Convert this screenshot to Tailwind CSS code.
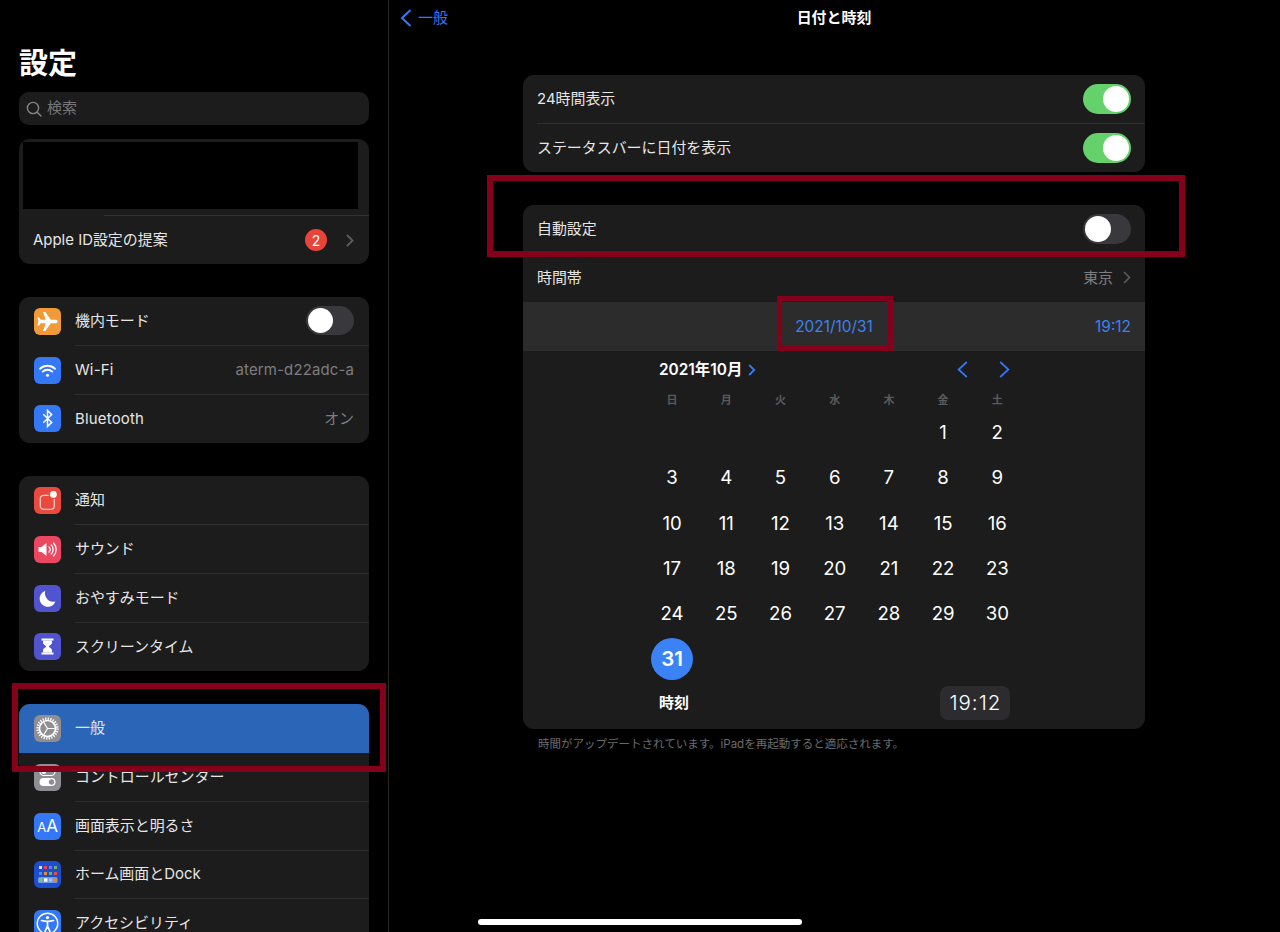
<!DOCTYPE html>
<html lang="ja">
<head>
<meta charset="utf-8">
<title>日付と時刻</title>
<script src="https://cdn.jsdelivr.net/npm/@tailwindcss/browser@4"></script>
</head>
<body class="bg-black">
<div class="relative flex w-[1280px] h-[932px] overflow-hidden bg-black text-[#e6e6e6] text-[14.95px] font-['Inter','Noto_Sans_CJK_JP',sans-serif]">

  <!-- Sidebar -->
  <aside class="w-[389px] h-[932px] shrink-0 border-r border-[#262626] pl-[19px] pr-[19px] pt-[44px] overflow-hidden">
    <h1 class="h-[40px] leading-[40px] text-[29px] font-bold text-white mb-[8px]">設定</h1>
    <div class="h-[33px] mb-[14px] rounded-[10px] bg-[#1c1c1c] flex items-center pl-[7px] gap-[5px] text-[#77777a]">
      <svg width="16" height="16" viewBox="0 0 16 16" fill="none" stroke="#85858a" stroke-width="1.4" stroke-linecap="round"><circle cx="7" cy="7" r="5.6"/><path d="M11.2 11.2 15 15"/></svg>
      <span>検索</span>
    </div>

    <section class="h-[125px] mb-[33px] rounded-[11px] bg-[#1c1c1c] overflow-hidden">
      <div class="h-[76px] pl-[4px] pt-[3px] border-b-0">
        <div class="w-[335px] h-[67px] bg-black"></div>
      </div>
      <div class="ml-[85px] border-t border-[#323232]"></div>
      <div class="h-[48px] pl-[14px] pr-[15px] flex items-center">
        <span class="flex-1">Apple ID設定の提案</span>
        <span class="w-[22px] h-[22px] rounded-full bg-[#e9443a] text-white text-[14px] flex items-center justify-center">2</span>
        <svg class="ml-[19px]" width="8" height="13" viewBox="0 0 8 13" fill="none" stroke="#5c5c5e" stroke-width="1.9"><path d="M1 1l5.5 5.5L1 12"/></svg>
      </div>
    </section>

    <section class="h-[146.25px] mb-[33px] rounded-[11px] bg-[#1c1c1c] overflow-hidden">
      <div class="h-[48.75px] flex items-center">
        <div class="w-[56px] shrink-0 pl-[15px]"><div class="w-[27px] h-[27px] rounded-[6px] bg-[#f19a38]"><svg width="27" height="27" viewBox="0 0 24 24" fill="#fff"><path d="M21 12c0-.8-.7-1.5-1.5-1.5H15L10 3.5H8l2.5 7H6L4.5 8.5H3l1 3.5-1 3.5h1.5L6 13.5h4.5l-2.5 7h2l5-7h4.5c.8 0 1.5-.7 1.5-1.5z"/></svg></div></div>
        <div class="flex-1 h-full border-b border-[#2e2e2e] flex items-center pr-[15px] justify-between">
          <span>機内モード</span>
          <span class="w-[48px] h-[29px] rounded-full bg-[#39393d] flex items-center pl-[2px]"><span class="w-[25px] h-[25px] rounded-full bg-white"></span></span>
        </div>
      </div>
      <div class="h-[48.75px] flex items-center">
        <div class="w-[56px] shrink-0 pl-[15px]"><div class="w-[27px] h-[27px] rounded-[6px] bg-[#3478f6]"><svg width="27" height="27" viewBox="0 0 27 27" fill="none" stroke="#fff" stroke-width="1.9" stroke-linecap="round"><path d="M6 11.7a11 11 0 0 1 15 0"/><path d="M8.7 14.6a7 7 0 0 1 9.6 0"/><circle cx="13.5" cy="18.2" r="1.5" fill="#fff" stroke="none"/></svg></div></div>
        <div class="flex-1 h-full border-b border-[#2e2e2e] flex items-center pt-[2px] pr-[15px] justify-between tracking-[0.15px]">
          <span>Wi-Fi</span>
          <span class="text-[#7d7d80]">aterm-d22adc-a</span>
        </div>
      </div>
      <div class="h-[48.75px] flex items-center">
        <div class="w-[56px] shrink-0 pl-[15px]"><div class="w-[27px] h-[27px] rounded-[6px] bg-[#3478f6]"><svg width="27" height="27" viewBox="0 0 27 27" fill="none" stroke="#fff" stroke-width="1.5"><path d="M9.3 9.3 17.7 17.4 13.5 21.5V5.5L17.7 9.6 9.3 17.7"/></svg></div></div>
        <div class="flex-1 h-full flex items-center pt-[1px] pr-[15px] justify-between">
          <span class="tracking-[0.2px]">Bluetooth</span>
          <span class="text-[#7d7d80]">オン</span>
        </div>
      </div>
    </section>

    <section class="h-[195px] mb-[33px] rounded-[11px] bg-[#1c1c1c] overflow-hidden">
      <div class="h-[48.75px] flex items-center">
        <div class="w-[56px] shrink-0 pl-[15px]"><div class="w-[27px] h-[27px] rounded-[6px] bg-[#ea4a3e]"><svg width="27" height="27" viewBox="0 0 27 27" fill="none"><rect x="6.3" y="8.3" width="14" height="14" rx="3.4" stroke="#f6c9c5" stroke-width="1.3"/><circle cx="19.4" cy="7.4" r="4.8" fill="#ea4a3e"/><circle cx="19.4" cy="7.4" r="3.4" fill="#fff"/></svg></div></div>
        <div class="flex-1 h-full border-b border-[#2e2e2e] flex items-center pt-[1px]"><span>通知</span></div>
      </div>
      <div class="h-[48.75px] flex items-center">
        <div class="w-[56px] shrink-0 pl-[15px]"><div class="w-[27px] h-[27px] rounded-[6px] bg-[#eb4760]"><svg width="27" height="27" viewBox="0 0 27 27" fill="none" stroke="#fff" stroke-linecap="round"><path d="M4.5 11h3l5-4v13l-5-4h-3z" fill="#fff" stroke="none"/><path d="M15 11a3.6 3.6 0 0 1 0 5" stroke-width="1.3"/><path d="M17.3 9a6.5 6.5 0 0 1 0 9" stroke-width="1.3"/><path d="M19.6 7a9.6 9.6 0 0 1 0 13" stroke-width="1.3"/></svg></div></div>
        <div class="flex-1 h-full border-b border-[#2e2e2e] flex items-center"><span>サウンド</span></div>
      </div>
      <div class="h-[48.75px] flex items-center">
        <div class="w-[56px] shrink-0 pl-[15px]"><div class="w-[27px] h-[27px] rounded-[6px] bg-[#5054cf]"><svg width="27" height="27" viewBox="0 0 27 27" fill="#fff"><path d="M11.3 5.8A8.2 8.2 0 1 0 21.5 16.6 8.6 8.6 0 0 1 11.3 5.8z"/></svg></div></div>
        <div class="flex-1 h-full border-b border-[#2e2e2e] flex items-center pt-[1px]"><span>おやすみモード</span></div>
      </div>
      <div class="h-[48.75px] flex items-center">
        <div class="w-[56px] shrink-0 pl-[15px]"><div class="w-[27px] h-[27px] rounded-[6px] bg-[#5054cf]"><svg width="27" height="27" viewBox="0 0 27 27" fill="#fff"><rect x="7.5" y="5.5" width="12" height="2"/><rect x="7.5" y="19.5" width="12" height="2"/><path d="M9 7.5h9v2.3c0 2-3 2.6-3 3.7s3 1.7 3 3.7v2.3H9v-2.3c0-2 3-2.6 3-3.7S9 11.8 9 9.8z"/></svg></div></div>
        <div class="flex-1 h-full flex items-center"><span>スクリーンタイム</span></div>
      </div>
    </section>

    <section class="h-[300px] rounded-t-[11px] bg-[#1c1c1c] overflow-hidden">
      <div class="h-[48.75px] flex items-center bg-[#2b65b8]">
        <div class="w-[56px] shrink-0 pl-[15px]"><div class="w-[27px] h-[27px] rounded-[6px] bg-[#8e8e93]"><svg width="27" height="27" viewBox="0 0 27 27" fill="none" stroke="#fff"><circle cx="13.5" cy="13.5" r="9.8" stroke-width="2.6" stroke-dasharray="1.28 1.28"/><circle cx="13.5" cy="13.5" r="8" stroke-width="1.6"/><path d="M13.5 13.5 9.8 7.2M13.5 13.5H20.7M13.5 13.5 9.8 19.8" stroke-width="1.2"/></svg></div></div>
        <div class="flex-1 h-full flex items-center"><span class="text-[#dfe6f2]">一般</span></div>
      </div>
      <div class="h-[48.75px] flex items-center">
        <div class="w-[56px] shrink-0 pl-[15px]"><div class="w-[27px] h-[27px] rounded-[6px] bg-[#8e8e93]"><svg width="27" height="27" viewBox="0 0 27 27" fill="none"><rect x="6" y="4" width="15" height="7.5" rx="3.75" stroke="#fff" stroke-width="1.2"/><circle cx="9.8" cy="7.75" r="2.3" fill="#fff"/><rect x="5.5" y="14" width="16" height="8" rx="4" fill="#fff"/><circle cx="17.5" cy="18" r="2.7" fill="#8e8e93"/></svg></div></div>
        <div class="flex-1 h-full border-b border-[#2e2e2e] flex items-center"><span>コントロールセンター</span></div>
      </div>
      <div class="h-[48.75px] flex items-center">
        <div class="w-[56px] shrink-0 pl-[15px]"><div class="w-[27px] h-[27px] rounded-[6px] bg-[#3478f6] flex items-baseline justify-center pt-[5px] text-white leading-none"><span class="text-[13px]">A</span><span class="text-[17px]">A</span></div></div>
        <div class="flex-1 h-full border-b border-[#2e2e2e] flex items-center pt-[1px]"><span>画面表示と明るさ</span></div>
      </div>
      <div class="h-[48.75px] flex items-center">
        <div class="w-[56px] shrink-0 pl-[15px]"><div class="w-[27px] h-[27px] rounded-[6px] bg-[#1d4ed0]"><svg width="27" height="27" viewBox="0 0 27 27"><rect x="5" y="5" width="3" height="3" fill="#ddd"/><rect x="10" y="5" width="3" height="3" fill="#e5484d"/><rect x="15" y="5" width="3" height="3" fill="#8a6fe8"/><rect x="20" y="5" width="3" height="3" fill="#6fb35a"/><rect x="5" y="11" width="3" height="3" fill="#4a90e8"/><rect x="10" y="11" width="3" height="3" fill="#e8893a"/><rect x="15" y="11" width="3" height="3" fill="#56b87a"/><rect x="20" y="11" width="3" height="3" fill="#e55040"/><rect x="4" y="16" width="19.5" height="6" rx="1.5" fill="#6f97e0"/><rect x="5" y="17.3" width="3.4" height="3.4" fill="#72c96a"/><rect x="10" y="17.3" width="3.4" height="3.4" fill="#fff"/><rect x="15" y="17.3" width="3.4" height="3.4" fill="#a5c4ee"/><rect x="19.5" y="17.3" width="3.4" height="3.4" fill="#e08a3a"/></svg></div></div>
        <div class="flex-1 h-full border-b border-[#2e2e2e] flex items-center"><span>ホーム画面とDock</span></div>
      </div>
      <div class="h-[48.75px] flex items-center">
        <div class="w-[56px] shrink-0 pl-[15px]"><div class="w-[27px] h-[27px] rounded-[6px] bg-[#3478f6]"><svg width="27" height="27" viewBox="0 0 27 27" fill="none" stroke="#fff"><circle cx="13.5" cy="13.5" r="10.3" stroke-width="1.4"/><circle cx="13.5" cy="7.6" r="1.7" fill="#fff" stroke="none"/><path d="M7.5 10.5c4 1.1 8 1.1 12 0M13.5 11.3v4.7M13.5 16l-2.6 5.8M13.5 16l2.6 5.8" stroke-width="1.7" stroke-linecap="round"/></svg></div></div>
        <div class="flex-1 h-full flex items-center"><span>アクセシビリティ</span></div>
      </div>
    </section>
  </aside>

  <!-- Detail -->
  <main class="flex-1 min-w-0 pr-[1px]">
    <header class="h-[37px] grid grid-cols-[1fr_auto_1fr] items-center">
      <div class="flex items-center pl-[11px] gap-[6px] text-[#3478f6]">
        <svg width="12" height="18" viewBox="0 0 12 18" fill="none" stroke="#3478f6" stroke-width="2"><path d="M10.5 1 2 9l8.5 8"/></svg>
        <span>一般</span>
      </div>
      <h2 class="font-semibold text-white">日付と時刻</h2>
      <div></div>
    </header>

    <section class="w-[622px] mx-auto mt-[38px] mb-[33px] rounded-[11px] bg-[#1c1c1c] overflow-hidden">
      <div class="h-[48.5px] ml-[14px] pr-[14px] flex items-center justify-between border-b border-[#2e2e2e]">
        <span>24時間表示</span>
        <span class="w-[48px] h-[30px] rounded-full bg-[#65d16b] flex items-center justify-end pr-[2px]"><span class="w-[26px] h-[26px] rounded-full bg-white"></span></span>
      </div>
      <div class="h-[48.5px] ml-[14px] pr-[14px] flex items-center justify-between">
        <span>ステータスバーに日付を表示</span>
        <span class="w-[48px] h-[30px] rounded-full bg-[#65d16b] flex items-center justify-end pr-[2px]"><span class="w-[26px] h-[26px] rounded-full bg-white"></span></span>
      </div>
    </section>

    <section class="w-[622px] mx-auto rounded-[11px] bg-[#1c1c1c] overflow-hidden">
      <div class="h-[49px] ml-[14px] pr-[14px] flex items-center justify-between border-b border-[#2e2e2e]">
        <span>自動設定</span>
        <span class="w-[48px] h-[30px] rounded-full bg-[#39393d] flex items-center pl-[2px]"><span class="w-[26px] h-[26px] rounded-full bg-white"></span></span>
      </div>
      <div class="h-[48px] ml-[14px] pr-[14px] flex items-center justify-between">
        <span>時間帯</span>
        <span class="flex items-center gap-[10px] text-[#7d7d80]">東京<svg width="8" height="13" viewBox="0 0 8 13" fill="none" stroke="#5c5c5e" stroke-width="1.6"><path d="M1 1l5.5 5.5L1 12"/></svg></span>
      </div>
      <div class="h-[49px] px-[14px] bg-[#2c2c2c] grid grid-cols-[1fr_auto_1fr] items-center text-[15.4px] text-[#3b82f0]">
        <span></span>
        <span>2021/10/31</span>
        <span class="text-right">19:12</span>
      </div>

      <div class="w-[379.4px] ml-[122px]">
        <div class="h-[38px] px-[14px] flex items-center font-semibold text-white">
          <span class="text-[15.4px]">2021年10月</span>
          <svg class="ml-[6px]" width="8" height="12" viewBox="0 0 8 12" fill="none" stroke="#3478f6" stroke-width="1.9"><path d="M1.2 1 6.2 6 1.2 11"/></svg>
          <svg class="ml-auto mb-[2px]" width="11" height="17" viewBox="0 0 11 17" fill="none" stroke="#3478f6" stroke-width="1.7"><path d="M9.8 1 1.6 8.5l8.2 7.5"/></svg>
          <svg class="ml-[31px] mb-[2px]" width="11" height="17" viewBox="0 0 11 17" fill="none" stroke="#3478f6" stroke-width="1.7"><path d="M1.2 1l8.2 7.5L1.2 16"/></svg>
        </div>
        <div class="h-[21.35px] grid grid-cols-7 text-center text-[11px] leading-[23px] font-semibold text-[#5a5a5c]">
          <span>日</span><span>月</span><span>火</span><span>水</span><span>木</span><span>金</span><span>土</span>
        </div>
        <div class="grid grid-cols-7 auto-rows-[45.3px] text-[18.6px] text-white text-center items-center">
          <span></span><span></span><span></span><span></span><span></span><span>1</span><span>2</span>
          <span>3</span><span>4</span><span>5</span><span>6</span><span>7</span><span>8</span><span>9</span>
          <span>10</span><span>11</span><span>12</span><span>13</span><span>14</span><span>15</span><span>16</span>
          <span>17</span><span>18</span><span>19</span><span>20</span><span>21</span><span>22</span><span>23</span>
          <span>24</span><span>25</span><span>26</span><span>27</span><span>28</span><span>29</span><span>30</span>
          <span class="flex justify-center"><span class="w-[42px] h-[42px] rounded-full bg-[#3b82f6] flex items-center justify-center text-[20.5px] font-semibold">31</span></span>
        </div>
        <div class="mt-[4px] mb-[9px] px-[14px] flex items-center justify-between">
          <span class="font-semibold text-white">時刻</span>
          <span class="w-[70px] h-[34px] rounded-[8px] bg-[#2c2c2e] flex items-center justify-center text-white text-[20.5px] font-light tracking-[1px]">19:12</span>
        </div>
      </div>
    </section>

    <p class="w-[622px] mx-auto mt-[7px] pl-[15px] text-[11.5px] leading-[16px] text-[#6b6b6e]">時間がアップデートされています。iPadを再起動すると適応されます。</p>
  </main>

  <!-- Annotation boxes and home indicator -->
  <div class="absolute left-[12px] top-[683px] w-[374px] h-[89px] border-[6px] border-[#85001a]"></div>
  <div class="absolute left-[487px] top-[175px] w-[698px] h-[82px] border-[6px] border-[#85001a]"></div>
  <div class="absolute left-[777px] top-[296px] w-[116px] h-[55px] border-[5px] border-[#85001a]"></div>
  <div class="absolute left-[478px] top-[919px] w-[324px] h-[6px] rounded-full bg-white"></div>
</div>
</body>
</html>
